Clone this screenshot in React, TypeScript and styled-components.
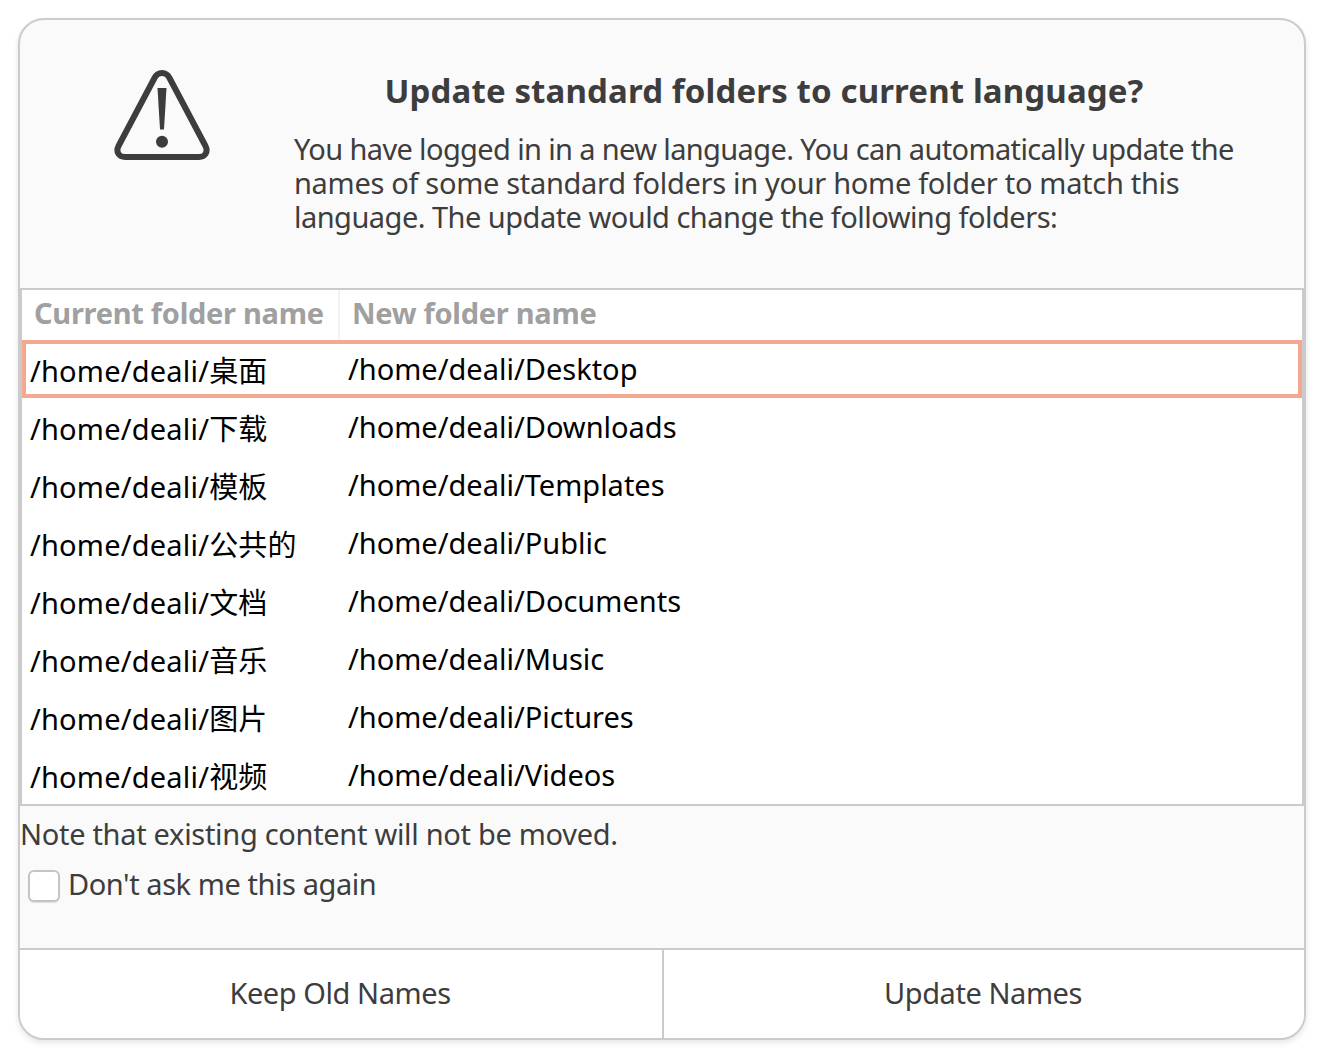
import styled, {createGlobalStyle} from 'styled-components'

const folders = [
    ['/home/deali/桌面', '/home/deali/Desktop'],
    ['/home/deali/下载', '/home/deali/Downloads'],
    ['/home/deali/模板', '/home/deali/Templates'],
    ['/home/deali/公共的', '/home/deali/Public'],
    ['/home/deali/文档', '/home/deali/Documents'],
    ['/home/deali/音乐', '/home/deali/Music'],
    ['/home/deali/图片', '/home/deali/Pictures'],
    ['/home/deali/视频', '/home/deali/Videos'],
]

function WarningIcon() {
    return (
        <svg width="100" height="94" viewBox="0 0 100 94" fill="none">
            <path
                d="M50 5 C53.5 5 56 7 57.5 10 L93.5 78 C96.5 84 93 89 87 89 L13 89 C7 89 3.5 84 6.5 78 L42.5 10 C44 7 46.5 5 50 5 Z"
                stroke="#3d3d3d"
                strokeWidth="6"
                strokeLinejoin="round"
            />
            <path d="M45.5 20 H54.5 L52 61.5 H48 Z" fill="#3d3d3d"/>
            <circle cx="50" cy="73.7" r="6" fill="#3d3d3d"/>
        </svg>
    )
}

export default function App() {
    return (
        <>
            <GlobalStyle/>
            <Window>
                <Header>
                    <IconSlot>
                        <WarningIcon/>
                    </IconSlot>
                    <Message>
                        <Title>Update standard folders to current language?</Title>
                        <Description>
                            <DescriptionLine $tracking={-0.63}>
                                You have logged in in a new language. You can automatically update the
                            </DescriptionLine>
                            <DescriptionLine $tracking={-0.31}>
                                names of some standard folders in your home folder to match this
                            </DescriptionLine>
                            <DescriptionLine $tracking={-0.52}>
                                language. The update would change the following folders:
                            </DescriptionLine>
                        </Description>
                    </Message>
                </Header>
                <Table>
                    <HeadRow>
                        <HeadCell>Current folder name</HeadCell>
                        <HeadCell>New folder name</HeadCell>
                    </HeadRow>
                    {folders.map(([current, next], index) => (
                        <Row key={next} $selected={index === 0}>
                            <CurrentCell>{current}</CurrentCell>
                            <NewCell>{next}</NewCell>
                        </Row>
                    ))}
                </Table>
                <Footer>
                    <Note>Note that existing content will not be moved.</Note>
                    <CheckRow>
                        <Checkbox/>
                        <CheckLabel>Don't ask me this again</CheckLabel>
                    </CheckRow>
                </Footer>
                <Actions>
                    <ActionButton>Keep Old Names</ActionButton>
                    <ActionButton>Update Names</ActionButton>
                </Actions>
            </Window>
        </>
    )
}

const GlobalStyle = createGlobalStyle`
    html, body {
        margin: 0;
        background: #ffffff;
    }

    body {
        padding: 18px;
        font-family: "Noto Sans", "Noto Sans CJK SC", sans-serif;
        font-size: 29px;
        color: #3d3d3d;
    }
`

const Window = styled.div`
    box-sizing: border-box;
    width: 1288px;
    height: 1022px;
    display: flex;
    flex-direction: column;
    background: #fafafa;
    border: 2px solid #cbcbcb;
    border-radius: 26px;
    overflow: hidden;
    box-shadow: 0 3px 6px rgba(0, 0, 0, 0.1);
`

const Header = styled.div`
    height: 268px;
    display: flex;
    flex-shrink: 0;
`

const IconSlot = styled.div`
    width: 274px;
    padding: 48px 0 0 92px;
    box-sizing: border-box;
`

const Message = styled.div`
    flex: 1;
    padding-top: 50px;
`

const Title = styled.div`
    width: 940px;
    text-align: center;
    font-size: 33px;
    font-weight: 700;
    line-height: 42px;
    letter-spacing: 0.13px;
`

const Description = styled.div`
    margin-top: 20px;
    font-size: 29px;
    white-space: nowrap;
`

const DescriptionLine = styled.div<{ $tracking: number }>`
    line-height: 34px;
    letter-spacing: ${({$tracking}) => $tracking}px;
`

const Table = styled.div`
    flex-shrink: 0;
    height: 518px;
    box-sizing: border-box;
    background: #ffffff;
    border: 2px solid #cbcbcb;
`

const HeadRow = styled.div`
    height: 50px;
    display: grid;
    grid-template-columns: 318px 1fr;
`

const HeadCell = styled.div`
    padding-left: 12px;
    font-weight: 700;
    line-height: 46px;
    letter-spacing: -0.28px;
    color: #a0a0a0;
    white-space: nowrap;

    &:first-child {
        border-right: 2px solid #f3f3f3;
    }
`

const Row = styled.div<{ $selected?: boolean }>`
    box-sizing: border-box;
    height: 58px;
    display: grid;
    grid-template-columns: 318px 1fr;
    align-items: center;
    color: #000000;
    outline: ${({$selected}) => ($selected ? '4px solid #f5a78f' : 'none')};
    outline-offset: -4px;
`

const CurrentCell = styled.div`
    padding: 4px 0 0 8px;
    line-height: 40px;
    letter-spacing: 0.2px;
    white-space: nowrap;
`

const NewCell = styled.div`
    padding-left: 8px;
    line-height: 40px;
    white-space: nowrap;
`

const Footer = styled.div`
    flex: 1;
`

const Note = styled.div`
    padding-top: 8px;
    line-height: 40px;
    letter-spacing: -0.3px;
    white-space: nowrap;
`

const CheckRow = styled.div`
    display: flex;
    align-items: center;
    gap: 8px;
    padding: 10px 0 0 8px;
`

const Checkbox = styled.div`
    box-sizing: border-box;
    width: 32px;
    height: 32px;
    margin-top: 4px;
    background: #ffffff;
    border: 2px solid #c4c4c4;
    border-radius: 6px;
    box-shadow: 0 1px 1px rgba(0, 0, 0, 0.1);
`

const CheckLabel = styled.div`
    line-height: 40px;
    letter-spacing: -0.43px;
`

const Actions = styled.div`
    height: 90px;
    flex-shrink: 0;
    display: grid;
    grid-template-columns: 1fr 1fr;
    background: #ffffff;
    border-top: 2px solid #cbcbcb;
    box-sizing: border-box;
`

const ActionButton = styled.div`
    display: flex;
    align-items: center;
    justify-content: center;
    padding: 0 2px 4px 0;
    letter-spacing: -0.43px;

    &:last-child {
        border-left: 2px solid #cbcbcb;
    }
`
